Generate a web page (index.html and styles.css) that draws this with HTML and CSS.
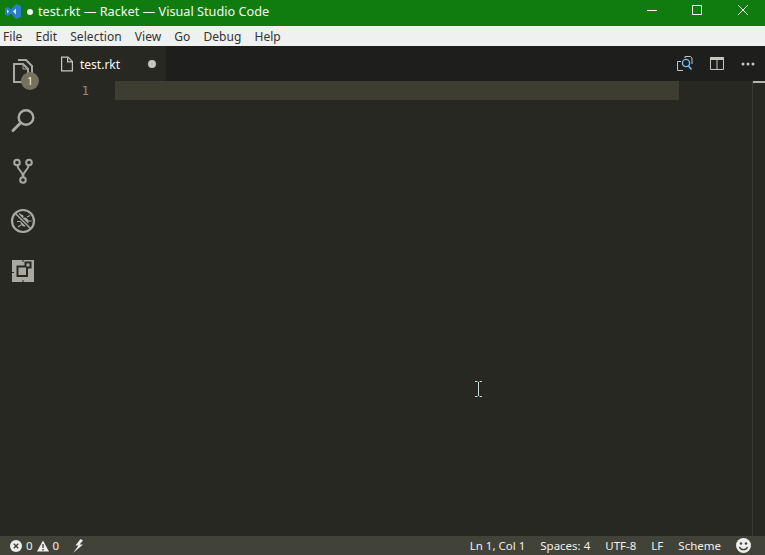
FILE: index.html
```html
<!DOCTYPE html>
<html lang="en">
<head>
<meta charset="utf-8">
<title>test.rkt — Racket — Visual Studio Code</title>
<link rel="stylesheet" href="styles.css">
</head>
<body>
<div class="window">
  <header class="titlebar">
    <svg class="logo" width="16" height="15" viewBox="0 0 16 15"><path fill="#2a80c8" d="M11 0l5 2v11l-5 2-5-5.500L3 12l-3-1.500v-6L3 3l3 2.500z"/><path fill="#d6ecfa" d="M11 4.500 8 7.500l3 3zM2 5.500l2 2-2 2z"/></svg>
    <span class="dot"></span>
    <span class="title">test.rkt — Racket — Visual Studio Code</span>
    <div class="winctl">
      <svg class="wc" width="46" height="26" viewBox="0 0 46 26"><path stroke="#fff" d="M20 10.500h10"/></svg>
      <svg class="wc" width="46" height="26" viewBox="0 0 46 26"><path fill="none" stroke="#fff" d="M19.500 5.500h9v9h-9z"/></svg>
      <svg class="wc" width="46" height="26" viewBox="0 0 46 26"><path stroke="#fff" d="M19 5l10 10M29 5l-10 10"/></svg>
    </div>
  </header>
  <nav class="menubar">
    <span>File</span><span>Edit</span><span>Selection</span><span>View</span><span>Go</span><span>Debug</span><span>Help</span>
  </nav>
  <div class="workbench">
    <aside class="activity">
      <div class="act first">
        <svg width="24" height="26" viewBox="0 0 24 26" fill="none" stroke="#a9a9a2" stroke-width="2"><path d="M8 3V2h7l6 6v12h-3"/><path d="M3 6h9l5 5v13H3z" fill="#272822"/><path d="M12 6v5h5" stroke-width="1"/></svg>
        <span class="badge">1</span>
      </div>
      <div class="act">
        <svg width="26" height="26" viewBox="0 0 26 26" fill="none" stroke="#a9a9a2"><circle cx="16" cy="9.500" r="7.300" stroke-width="2.400"/><path d="M10.500 15 3 22.500" stroke-width="3" stroke-linecap="round"/></svg>
      </div>
      <div class="act">
        <svg width="24" height="27" viewBox="0 0 24 27" fill="none" stroke="#a9a9a2" stroke-width="2"><circle cx="6" cy="4.500" r="2.800"/><circle cx="18" cy="4.500" r="2.800"/><circle cx="12" cy="22" r="2.800"/><path d="M6.500 7.500c0 5 5.500 5 5.500 11.500M17.500 7.500c0 5-5.500 5-5.500 11.500"/></svg>
      </div>
      <div class="act">
        <svg width="26" height="26" viewBox="0 0 26 26"><ellipse cx="14.500" cy="14" rx="4" ry="4.500" fill="#a9a9a2"/><circle cx="11.500" cy="8.500" r="2" fill="#a9a9a2"/><path d="M9 5.500l2 2M17 9l3-1.500M18 13h3.500M7 13.500h4M17 17l2.500 2.500M8 19l3-2" stroke="#a9a9a2" stroke-width="1.200"/><path d="M5 5l16 16" stroke="#272822" stroke-width="3.600"/><circle cx="13" cy="13" r="11" fill="none" stroke="#a9a9a2" stroke-width="2.200"/><path d="M5.200 5.200l15.600 15.600" stroke="#a9a9a2" stroke-width="1.500"/></svg>
      </div>
      <div class="act">
        <svg width="24" height="24" viewBox="0 -1 24 24"><path fill="#a9a9a2" d="M1 1h22v22H1z"/><path fill="#272822" d="M5.500 6.500h8V2.500h7v7h-3.500v8.500H5.500z"/><path fill="#a9a9a2" d="M7.500 8.500h7.500v7.500H7.500zM15.500 4.500h3v3h-3z"/><path fill="#272822" d="M11.500 1h1v2h-1zM1 13h2v1H1zM11.500 21h1v2h-1z"/></svg>
      </div>
    </aside>
    <main class="main">
      <div class="tabs">
        <div class="tab">
          <svg width="16" height="16" viewBox="0 0 16 16" fill="none" stroke="#c5c5c0" stroke-width="1.200"><path d="M2.600 1.100h6.400l4.400 4.400v9.400H2.600z"/><path d="M8.600 1.500v4.300h4.400"/></svg>
          <span class="tabname">test.rkt</span>
          <span class="dirty"></span>
        </div>
        <div class="tabactions">
          <svg width="16" height="16" viewBox="0 0 16 16" fill="none"><path d="M8 2V.5h5.500l1.500 1.500v6" stroke="#c5c5c0"/><path d="M6 14.500H.5V5.500H4" stroke="#c5c5c0"/><circle cx="9" cy="7" r="3.600" stroke="#75beff" stroke-width="1.400"/><path d="M11.500 10l3 3.500" stroke="#75beff" stroke-width="1.600"/></svg>
          <svg width="14" height="13" viewBox="0 0 14 13" fill="none"><path d="M.5.500h13v12H.5z" stroke="#c5c5c0"/><path fill="#c5c5c0" d="M0 0h14v3H0z"/><path d="M7 3v9" stroke="#c5c5c0"/></svg>
          <svg width="14" height="4" viewBox="0 0 14 4" fill="#c5c5c0"><circle cx="2" cy="2" r="1.500"/><circle cx="7" cy="2" r="1.500"/><circle cx="12" cy="2" r="1.500"/></svg>
        </div>
      </div>
      <div class="editor">
        <div class="gutter"><span class="lineno">1</span></div>
        <div class="code"><div class="curline"></div></div>
        <div class="ruler"><div class="rulermark"></div></div>
        <svg class="ibeam" width="7" height="16" viewBox="0 0 7 16" fill="none" stroke="#c8dce0"><path d="M0 .5h2.500M4.500.5H7M0 15.500h2.500M4.500 15.500H7M3.500 1v14"/></svg>
      </div>
    </main>
  </div>
  <footer class="statusbar">
    <div class="stleft">
      <span class="stitem">
        <svg width="12" height="12" viewBox="0 0 12 12"><circle cx="6" cy="6" r="6" fill="#eee"/><path d="M3.800 3.800l4.400 4.400M8.200 3.800l-4.400 4.400" stroke="#414339" stroke-width="1.500"/></svg>
        <span>0</span>
        <svg width="12" height="12" viewBox="0 0 12 12"><path fill="#eee" d="M6 .5 12 11.500H0z"/><path d="M6 4v4M6 9v1.500" stroke="#414339" stroke-width="1.400"/></svg>
        <span>0</span>
      </span>
      <svg class="bolt" width="12" height="14" viewBox="0 0 12 14"><path fill="#eee" d="M8.500 0 3.500 6.500h3L1 14l10-8.500H7.500L11 1.500z"/></svg>
    </div>
    <div class="stright">
      <span>Ln 1, Col 1</span><span>Spaces: 4</span><span>UTF-8</span><span>LF</span><span>Scheme</span>
      <svg width="15" height="15" viewBox="0 0 15 15"><circle cx="7.500" cy="7.500" r="7.500" fill="#eee"/><circle cx="5" cy="5.500" r="1.200" fill="#414339"/><circle cx="10" cy="5.500" r="1.200" fill="#414339"/><path d="M3.500 9c1 3.500 7 3.500 8 0" fill="none" stroke="#414339" stroke-width="1.300"/></svg>
    </div>
  </footer>
</div>
</body>
</html>
```

FILE: styles.css
```css
* { box-sizing: border-box; }
html, body { margin: 0; height: 100%; overflow: hidden; }
body { font-family: "Noto Sans", "Liberation Sans", sans-serif; }
.window { width: 765px; height: 555px; display: flex; flex-direction: column; background: #272822; }

.titlebar { height: 26px; background: #107c10; color: #fff; display: flex; align-items: center; padding-left: 5px; flex: none; }
.logo { flex: none; margin-top: -4px; }
.dot { width: 6px; height: 6px; border-radius: 50%; background: #f4f9f4; margin-left: 6px; margin-top: -3px; flex: none; }
.title { margin-left: 5px; margin-top: -4px; font-size: 12.7px; white-space: nowrap; color: #f4f9f4; }
.winctl { margin-left: auto; display: flex; align-items: center; height: 26px; }
.wc { display: block; }

.menubar { height: 20px; background: #eff1f1; color: #333; display: flex; align-items: center; font-size: 12px; letter-spacing: 0.06px; flex: none; padding-left: 3px; gap: 13px; }

.workbench { flex: 1; display: flex; min-height: 0; }
.activity { width: 45px; flex: none; display: flex; flex-direction: column; align-items: center; padding-top: 12px; background: #272822; }
.act { position: relative; height: 50px; width: 45px; display: flex; justify-content: center; }
.act svg { display: block; }
.badge { position: absolute; left: 21px; top: 14px; width: 18px; height: 18px; border-radius: 50%; background: #75715e; color: #f8f8f2; font-size: 10px; line-height: 18px; text-align: center; }

.main { flex: 1; display: flex; flex-direction: column; min-width: 0; }
.tabs { height: 35px; background: #1e1f1c; display: flex; flex: none; justify-content: space-between; }
.tab { width: 121px; background: #272822; display: flex; align-items: center; padding-left: 14px; position: relative; }
.tabname { margin-left: 5px; margin-top: 1px; font-size: 12px; color: #f8f8f2; }
.dirty { width: 8px; height: 8px; border-radius: 50%; background: #c5c5c0; margin-left: 28px; }
.tabactions { display: flex; align-items: center; gap: 17px; padding-right: 10px; }

.editor { flex: 1; position: relative; display: flex; min-height: 0; }
.gutter { width: 70px; flex: none; text-align: right; }
.lineno { display: block; height: 19px; line-height: 20px; font-family: "DejaVu Sans Mono", monospace; font-size: 12px; color: #90908a; padding-right: 26px; }
.code { flex: 1; }
.curline { height: 19px; width: 564px; background: #3e3d32; }
.ruler { width: 13px; flex: none; border-left: 1px solid #3a3b34; }
.rulermark { height: 2px; background: #b5b5ae; }
.ibeam { position: absolute; left: 430px; top: 300px; }

.statusbar { height: 19px; background: #414339; color: #f0f0ea; font-size: 11.5px; display: flex; align-items: center; justify-content: space-between; flex: none; padding: 0 14px 0 10px; }
.stleft, .stright { display: flex; align-items: center; }
.stitem { display: flex; align-items: center; gap: 4px; }
.bolt { margin-left: 13px; }
.stright { gap: 15px; }
```
